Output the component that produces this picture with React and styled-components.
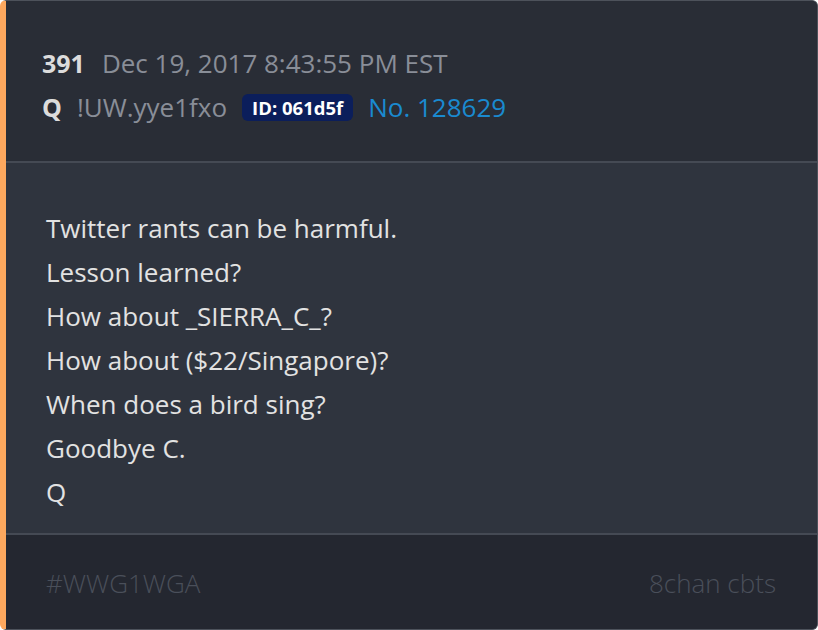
import React from "react";
import styled, { createGlobalStyle } from "styled-components";

const Global = createGlobalStyle`
  body {
    margin: 0;
    background: #ffffff;
    font-family: "Open Sans", "Liberation Sans", sans-serif;
  }
`;

const Card = styled.div`
  width: 818px;
  height: 630px;
  box-sizing: border-box;
  display: flex;
  flex-direction: column;
  border: 1px solid #4d525b;
  border-left: 6px solid #fda85e;
  border-radius: 6px;
  overflow: hidden;
  background: #2f343e;
`;

const Header = styled.div`
  background: #292d36;
  padding: 40px 36px 32px 36px;
  border-bottom: 2px solid #454a54;
`;

const MetaRow = styled.div`
  display: flex;
  align-items: center;
  gap: ${(p) => p.gap || 15}px;
  height: 44px;
  font-size: 26px;
  color: #898e98;
`;

const Strong = styled.span`
  font-weight: 700;
  font-size: 25px;
  color: #dcdcdc;
`;

const Badge = styled.span`
  background: #0b1e5b;
  color: #ffffff;
  font-weight: 700;
  font-size: 18.5px;
  padding: 2px 10px;
  border-radius: 6px;
  line-height: 23px;
`;

const PostNo = styled.span`
  color: #1a8ad0;
  font-size: 26px;
`;

const Body = styled.div`
  flex: 1;
  padding: 43px 40px 0 40px;
  border-bottom: 2px solid #454a54;
`;

const Line = styled.div`
  font-size: 26px;
  line-height: 44px;
  color: #e2e2e2;
`;

const Footer = styled.div`
  background: #242730;
  height: 92px;
  display: flex;
  align-items: center;
  justify-content: space-between;
  padding: 2px 41px 0 40px;
  font-size: 26px;
  font-weight: 300;
  color: #4a4f5a;
`;

const lines = [
  "Twitter rants can be harmful.",
  "Lesson learned?",
  "How about _SIERRA_C_?",
  "How about ($22/Singapore)?",
  "When does a bird sing?",
  "Goodbye C.",
  "Q",
];

export default function App() {
  return (
    <>
      <Global />
      <Card>
        <Header>
          <MetaRow gap={17}>
            <Strong>391</Strong>
            <span>Dec 19, 2017 8:43:55 PM EST</span>
          </MetaRow>
          <MetaRow>
            <Strong>Q</Strong>
            <span>!UW.yye1fxo</span>
            <Badge>ID: 061d5f</Badge>
            <PostNo>No. 128629</PostNo>
          </MetaRow>
        </Header>
        <Body>
          {lines.map((l) => (
            <Line key={l}>{l}</Line>
          ))}
        </Body>
        <Footer>
          <span>#WWG1WGA</span>
          <span>8chan cbts</span>
        </Footer>
      </Card>
    </>
  );
}
